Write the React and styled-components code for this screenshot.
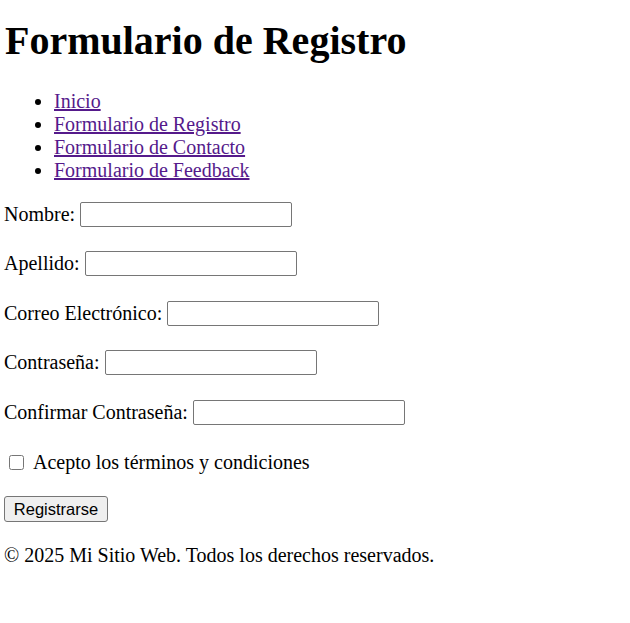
import React from "react";
import styled, { createGlobalStyle } from "styled-components";

const GlobalStyle = createGlobalStyle`
    html, body {
        margin: 0;
        background: #ffffff;
    }
    body {
        font-family: "Liberation Serif", "Times New Roman", serif;
        font-size: 20px;
        color: #000000;
    }
`;

const Page = styled.div`
    padding: 0 4px;
`;

const Title = styled.h1`
    font-size: 40px;
    font-weight: bold;
    margin: 17px 0 26px 1px;
    line-height: normal;
`;

const NavList = styled.ul`
    margin: 0;
    padding-left: 50px;
    line-height: 23px;
`;

const NavLink = styled.a`
    color: #551a8b;
    text-decoration: underline;
`;

const Form = styled.form`
    margin-top: 19px;
    display: flex;
    flex-direction: column;
    align-items: flex-start;
`;

const Field = styled.div`
    display: flex;
    align-items: center;
    gap: 5px;
    height: 26px;
    margin-bottom: ${(p) => p.$gap || "23.5px"};
    line-height: 23px;
`;

const TextInput = styled.input`
    box-sizing: border-box;
    width: 212px;
    height: 25px;
    border: 1px solid #767676;
    border-radius: 2px;
    padding: 1px 3px;
    font-size: 16px;
    background: #ffffff;
`;

const CheckRow = styled.label`
    display: flex;
    align-items: center;
    height: 23px;
    line-height: 23px;
    margin: 0 0 22px;
`;

const Check = styled.input`
    width: 15px;
    height: 15px;
    margin: 0 9px 0 5px;
`;

const SubmitButton = styled.button`
    box-sizing: border-box;
    width: 104px;
    height: 26px;
    padding: 0;
    font-family: "Liberation Sans", Arial, sans-serif;
    font-size: 16.5px;
    color: #000000;
    background: #efefef;
    border: 1px solid #767676;
    border-radius: 3px;
`;

const Footer = styled.footer`
    margin-top: 22px;
    line-height: 23px;
`;

const fields = [
    { label: "Nombre:", type: "text" },
    { label: "Apellido:", type: "text" },
    { label: "Correo Electrónico:", type: "email" },
    { label: "Contraseña:", type: "password" },
    { label: "Confirmar Contraseña:", type: "password", gap: "26px" },
];

const links = [
    "Inicio",
    "Formulario de Registro",
    "Formulario de Contacto",
    "Formulario de Feedback",
];

export default function App() {
    return (
        <Page>
            <GlobalStyle />
            <Title>Formulario de Registro</Title>
            <NavList>
                {links.map((l) => (
                    <li key={l}>
                        <NavLink href="#">{l}</NavLink>
                    </li>
                ))}
            </NavList>
            <Form onSubmit={(e) => e.preventDefault()}>
                {fields.map((f) => (
                    <Field key={f.label} $gap={f.gap}>
                        <span>{f.label}</span>
                        <TextInput type={f.type} />
                    </Field>
                ))}
                <CheckRow>
                    <Check type="checkbox" />
                    Acepto los términos y condiciones
                </CheckRow>
                <SubmitButton type="submit">Registrarse</SubmitButton>
            </Form>
            <Footer>© 2025 Mi Sitio Web. Todos los derechos reservados.</Footer>
        </Page>
    );
}
